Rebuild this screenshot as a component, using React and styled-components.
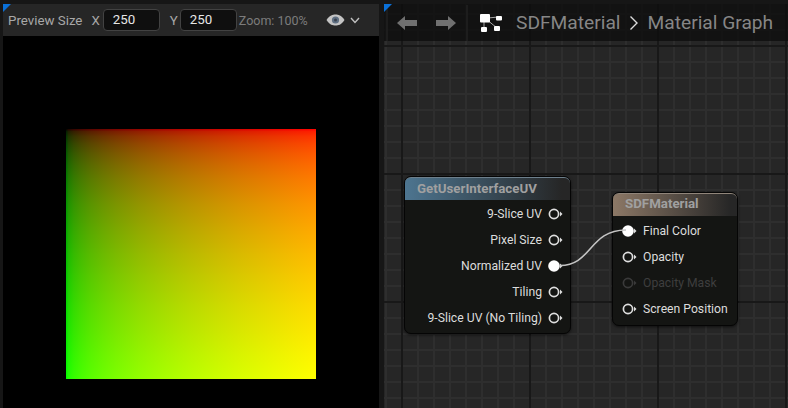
import React from 'react';
import styled, { createGlobalStyle } from 'styled-components';

const GlobalStyle = createGlobalStyle`
html, body {
  margin: 0;
  padding: 0;
  background: #161616;
}
body {
  font-family: Roboto, "Liberation Sans", sans-serif;
  overflow: hidden;
}
`

// the preview shows linear uv values, so the ramps follow the display gamma
const gammaRamp = (direction, channel) => {
    const stops = [0, 0.01, 0.03, 0.06, 0.1, 0.15, 0.2, 0.3, 0.4, 0.5, 0.6, 0.7, 0.8, 0.9, 1].map(t => {
        const value = Math.round(255 * Math.pow(t, 1 / 2.2))
        const colour = channel === 'r' ? `rgb(${value},0,0)` : `rgb(0,${value},0)`
        return `${colour} ${t * 100}%`
    })
    return `linear-gradient(${direction}, ${stops.join(', ')})`
}

const Editor = styled.div`
width: 788px;
height: 408px;
box-sizing: border-box;
padding: 4px 0 0 3px;
display: flex;
gap: 5px;
overflow: hidden;
background: #161616;
`

const PreviewPanel = styled.section`
position: relative;
width: 376px;
display: flex;
flex-direction: column;
background: #000;
`

const CornerMark = styled.div`
position: absolute;
top: 0;
left: 0;
width: 8px;
height: 8px;
background: #0a70d8;
clip-path: polygon(0 0, 100% 0, 0 100%);
`

const PreviewBar = styled.div`
height: 32px;
flex: none;
display: flex;
align-items: center;
padding-left: 5px;
background: #262626;
font-size: 13.3px;
color: #a8a8a8;
`

const BarLabel = styled.span`
margin-left: ${props => props.left || 0}px;
font-size: ${props => props.size || 13.3}px;
color: ${props => props.color || '#a8a8a8'};
white-space: nowrap;
`

const SizeInput = styled.div`
width: 57px;
height: 22px;
box-sizing: border-box;
margin-left: ${props => props.left || 0}px;
padding-left: 9px;
line-height: 20px;
border: 1px solid #424242;
border-radius: 4px;
background: #0f0f0f;
color: #e6e6e6;
`

const EyeHolder = styled.div`
margin-left: 18px;
display: flex;
align-items: center;
gap: 5px;
`

const PreviewArea = styled.div`
flex: 1;
display: flex;
justify-content: center;
padding-top: 93px;
`

const PreviewSquare = styled.div`
width: 250px;
height: 250px;
background-image: ${gammaRamp('to right', 'r')}, ${gammaRamp('to bottom', 'g')};
background-blend-mode: screen;
`

const Graph = styled.section`
position: relative;
flex: 1;
overflow: hidden;
background-color: #262626;
background-image:
  linear-gradient(to right, #181818 2px, transparent 2px),
  linear-gradient(to bottom, #181818 2px, transparent 2px),
  linear-gradient(to right, #2e2e2e 2px, transparent 2px),
  linear-gradient(to bottom, #2e2e2e 2px, transparent 2px);
background-size: 128px 128px, 128px 128px, 16px 16px, 16px 16px;
background-position: 17px 0, 0 41px, 1px 0, 0 9px;
`

const GraphBar = styled.div`
position: relative;
height: 37px;
display: flex;
align-items: center;
background: rgba(14, 14, 14, 0.8);
`

const BarDivider = styled.div`
width: 2px;
height: 36px;
flex: none;
margin-left: ${props => props.left}px;
background: #1d1d1d;
`

const NavArrow = styled.svg`
width: 20px;
height: 16px;
flex: none;
margin-left: ${props => props.left}px;
`

const Crumb = styled.span`
margin-left: ${props => props.left}px;
font-size: 19.2px;
color: #868686;
white-space: nowrap;
`

const Wire = styled.svg`
position: absolute;
left: 0;
top: 0;
width: 404px;
height: 404px;
pointer-events: none;
`

const Node = styled.div`
position: absolute;
left: ${props => props.x}px;
top: ${props => props.y}px;
width: ${props => props.width}px;
box-sizing: border-box;
padding-bottom: ${props => props.bottom}px;
border: 1px solid #050505;
border-radius: 7px;
background: #141513;
box-shadow: 0 1px 3px rgba(0, 0, 0, 0.6);
`

const NodeHeader = styled.div`
height: 23px;
box-sizing: border-box;
padding-left: ${props => props.indent}px;
line-height: ${props => props.line}px;
border-radius: 6px 6px 0 0;
border-top: 1px solid ${props => props.edge};
background: linear-gradient(to right, ${props => props.tint}, #262626 95%);
font-size: 13.3px;
font-weight: 700;
color: #a0a0a0;
`

const PinRow = styled.div`
height: 26px;
display: flex;
align-items: center;
justify-content: ${props => props.right ? 'flex-end' : 'flex-start'};
gap: 6px;
padding: ${props => props.right ? '0 7px 0 0' : '0 0 0 9px'};
font-size: 12.2px;
color: ${props => props.dim ? '#3e3e3e' : '#dcdcdc'};
white-space: nowrap;
`

const PinRows = styled.div`
padding-top: ${props => props.top}px;
`

function Pin({ filled, dim }) {
    const colour = dim ? '#3a3a3a' : '#dedede'
    return (
        <svg width="15" height="12" viewBox="0 0 15 12" style={{ flex: 'none' }}>
            <circle cx="6" cy="6" r={filled ? 5.8 : 4.6} fill={filled ? '#fff' : 'none'} stroke={filled ? 'none' : colour} strokeWidth="1.7" />
            <path d="M12 3.5 L14.5 6 L12 8.5 Z" fill={colour} />
        </svg>
    )
}

function GraphIcon() {
    return (
        <svg width="22" height="19" viewBox="0 0 22 19" style={{ flex: 'none', marginLeft: 12 }}>
            <path d="M4 6 L4 16 M6 6 L17 15 M8 5 L18 4" stroke="#a8a8a8" strokeWidth="1" fill="none" />
            <rect x="0" y="1" width="10" height="8.500" rx="1" fill="#fff" />
            <rect x="16" y="3" width="6" height="4.500" rx="1" fill="#fff" />
            <rect x="1" y="14" width="6" height="5" rx="1" fill="#fff" />
            <rect x="14" y="13" width="6" height="5" rx="1" fill="#fff" />
        </svg>
    )
}

const outputs = ['9-Slice UV', 'Pixel Size', 'Normalized UV', 'Tiling', '9-Slice UV (No Tiling)']

function App() {
    return (
        <Editor>
            <GlobalStyle />
            <PreviewPanel>
                <PreviewBar>
                    <BarLabel>Preview Size</BarLabel>
                    <BarLabel left={9}>X</BarLabel>
                    <SizeInput left={3}>250</SizeInput>
                    <BarLabel left={10}>Y</BarLabel>
                    <SizeInput left={2}>250</SizeInput>
                    <BarLabel left={2} size={12.5} color="#7c7c7c">Zoom: 100%</BarLabel>
                    <EyeHolder>
                        <svg width="19" height="12" viewBox="0 0 19 12">
                            <path d="M0.5 6 C4 1 6.500 0.500 9.500 0.500 C12.500 0.500 15 1 18.500 6 C15 11 12.500 11.500 9.500 11.500 C6.500 11.500 4 11 0.500 6 Z" fill="#c4c4c4" />
                            <circle cx="9.500" cy="6" r="3.600" fill="#5f6f82" />
                            <circle cx="9.500" cy="6" r="1.500" fill="#39424e" />
                        </svg>
                        <svg width="10" height="7" viewBox="0 0 10 7">
                            <path d="M1 1 L5 5.500 L9 1" stroke="#c0c0c0" strokeWidth="1.400" fill="none" />
                        </svg>
                    </EyeHolder>
                </PreviewBar>
                <PreviewArea>
                    <PreviewSquare />
                </PreviewArea>
                <CornerMark />
            </PreviewPanel>
            <Graph>
                <GraphBar>
                    <BarDivider left={2} />
                    <NavArrow left={9} viewBox="0 0 20 16">
                        <path d="M0 8 L8 1 L8 5 L20 5 L20 11 L8 11 L8 15 Z" fill="#707070" />
                    </NavArrow>
                    <NavArrow left={19} viewBox="0 0 20 16">
                        <path d="M20 8 L12 1 L12 5 L0 5 L0 11 L12 11 L12 15 Z" fill="#707070" />
                    </NavArrow>
                    <BarDivider left={10} />
                    <GraphIcon />
                    <Crumb left={14}>SDFMaterial</Crumb>
                    <svg width="10" height="18" viewBox="0 0 10 18" style={{ flex: 'none', marginLeft: 8 }}>
                        <path d="M1.500 2.500 L8 9 L1.500 15.500" stroke="#dcdcdc" strokeWidth="1.400" fill="none" />
                    </svg>
                    <Crumb left={9}>Material Graph</Crumb>
                </GraphBar>
                <CornerMark />
                <Node x={20} y={172} width={167} bottom={2}>
                    <NodeHeader indent={12} line={22} tint="#4d7590" edge="#6d7f8c">GetUserInterfaceUV</NodeHeader>
                    <PinRows top={1}>
                        {outputs.map(label => (
                            <PinRow right key={label}>
                                {label}
                                <Pin filled={label === 'Normalized UV'} />
                            </PinRow>
                        ))}
                    </PinRows>
                </Node>
                <Node x={228} y={188} width={126} bottom={3}>
                    <NodeHeader indent={12} line={20} tint="#8c7866" edge="#90857a">SDFMaterial</NodeHeader>
                    <PinRows top={2}>
                        <PinRow><Pin filled />Final Color</PinRow>
                        <PinRow><Pin />Opacity</PinRow>
                        <PinRow dim><Pin dim />Opacity Mask</PinRow>
                        <PinRow><Pin />Screen Position</PinRow>
                    </PinRows>
                </Node>
                <Wire viewBox="0 0 404 404">
                    <path d="M176 261.500 C208 261.500 205 226 242 226" stroke="#c4c4c4" strokeWidth="1.600" fill="none" />
                </Wire>
            </Graph>
        </Editor>
    )
}

export default App;
